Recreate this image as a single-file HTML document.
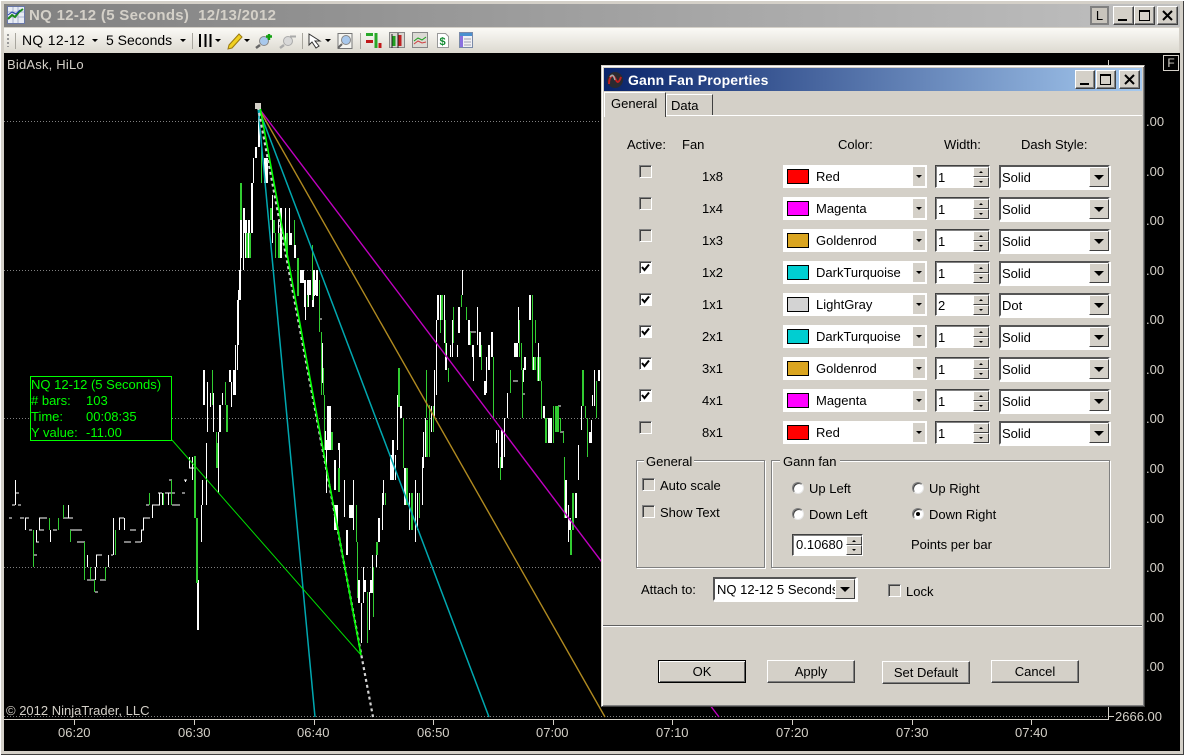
<!DOCTYPE html>
<html><head><meta charset="utf-8"><title>NQ 12-12</title>
<style>
html,body{margin:0;padding:0;background:#d4d0c8;}
body{width:1184px;height:755px;overflow:hidden;position:relative;font:13px "Liberation Sans",sans-serif;color:#000;}
div,span{position:absolute;box-sizing:border-box;white-space:pre;}
.t{line-height:16px;height:16px;margin-top:1px;}
.wb{background:#d4d0c8;border:1px solid;border-color:#fff #404040 #404040 #fff;box-shadow:inset -1px -1px 0 #808080;}
.cb{width:13px;height:13px;background:#d4d0c8;border:1px solid;border-color:#808080 #fff #fff #808080;box-shadow:inset 1px 1px 0 #404040;}
.cb.on{background:#fff;}
.combo{left:783px;width:144px;height:23px;background:#fff;}
.sw{left:4px;top:4px;width:22px;height:15px;border:1px solid #000;}
.combo .n{left:33px;top:4px;}
.combo .b{left:130px;top:2px;width:12px;height:19px;background:#d4d0c8;}
.combo .b i{position:absolute;width:0;height:0;border-left:3px solid transparent;border-right:3px solid transparent;border-top:3px solid #000;left:3px;top:8px;}
.spin{left:935px;width:55px;height:23px;background:#fff;border:1px solid;border-color:#404040 #fff #fff #404040;box-shadow:inset 1px 1px 0 #808080;}
.spin .v{left:2px;top:4px;}
.up,.dn{background:#d4d0c8;border:1px solid;border-color:#fff #404040 #404040 #fff;left:37px;width:16px;height:10px;}
.up{top:1px;}.dn{top:11px;}
.up i,.dn i{position:absolute;left:5px;width:0;height:0;border-left:2px solid transparent;border-right:2px solid transparent;}
.up i{top:3px;border-bottom:2px solid #000;}.dn i{top:3px;border-top:2px solid #000;}
.dash{left:999px;width:111px;height:24px;background:#fff;border:2px solid;border-color:#555 #fff #fff #555;box-shadow:1px 1px 0 #fff;}
.dash .d{left:1px;top:3px;}
.dash .b{left:88px;top:0;width:20px;height:20px;background:#d4d0c8;border:1px solid;border-color:#fff #404040 #404040 #fff;}
.dash .b i{position:absolute;left:4px;top:7px;width:0;height:0;border-left:5px solid transparent;border-right:5px solid transparent;border-top:5px solid #000;}
.btn{width:88px;height:23px;background:#d4d0c8;border:1px solid;border-color:#fff #404040 #404040 #fff;box-shadow:inset -1px -1px 0 #808080;text-align:center;line-height:21px;}
.grp{border:1px solid #808080;box-shadow:inset 1px 1px 0 #fff,1px 1px 0 #fff;}
.rad{width:12px;height:12px;border-radius:50%;background:#fff;border:1px solid;border-color:#808080 #e8e8e8 #e8e8e8 #808080;box-shadow:inset 1px 1px 0 #404040;}
.yl{left:1146px;width:20px;color:#d4d0c8;}
.xl{color:#d4d0c8;top:724px;}
.ck{position:absolute;left:1px;top:1px;}
</style></head><body>

<div style="left:0;top:0;width:1184px;height:755px;background:#d4d0c8;box-shadow:inset 1px 1px 0 #fff,inset -1px -1px 0 #404040"></div>

<!-- title -->
<div style="left:4px;top:4px;width:1176px;height:23px;background:linear-gradient(90deg,#808080,#c0c0c0)"></div>
<svg style="position:absolute;left:7px;top:6px" width="18" height="18" viewBox="0 0 18 18">
<rect x=".5" y=".5" width="17" height="17" fill="#e8ecf4" stroke="#6a78a8"/>
<path d="M1 6H17M1 11H17M6 1V17M11 1V17" stroke="#aab4d0"/>
<path d="M1 13L5 9 8 11 12 6 16 3" stroke="#1e8a1e" stroke-width="2" fill="none"/>
<path d="M1 9L5 6 9 8 13 4" stroke="#2040b0" fill="none"/>
</svg>
<div class="t" style="left:29px;top:7px;color:#d4d0c8;font-weight:bold;font-size:15px;letter-spacing:.3px">NQ 12-12 (5 Seconds)  12/13/2012</div>
<div style="left:1090px;top:6px;width:19px;height:19px;background:#c8c4bc;border:2px solid #808080;text-align:center;line-height:15px;font-size:13px">L</div>
<div class="wb" style="left:1113px;top:6px;width:21px;height:19px"><span style="left:4px;top:12px;width:9px;height:2px;background:#000"></span></div>
<div class="wb" style="left:1134px;top:6px;width:21px;height:19px"><span style="left:4px;top:3px;width:11px;height:11px;border:1px solid #000;border-top-width:2px"></span></div>
<div class="wb" style="left:1157px;top:6px;width:21px;height:19px"><svg style="position:absolute;left:4px;top:3px" width="11" height="11"><path d="M1 1L10 10M10 1L1 10" stroke="#000" stroke-width="2"/></svg></div>

<!-- toolbar -->
<div style="left:4px;top:28px;width:1175px;height:25px;background:linear-gradient(#fbfaf6,#dcd9d0)"></div>
<svg style="position:absolute;left:0;top:28px" width="480" height="25" viewBox="0 28 480 25">
<path d="M7 34h2v2h-2zM7 38h2v2h-2zM7 42h2v2h-2zM7 46h2v1h-2z" fill="#999"/>
<path d="M15.5 33V49M192.5 33V49M302.5 33V49M360.5 33V49" stroke="#a8a69e"/>
<path d="M92 39h6l-3 3zM180 39h6l-3 3zM215 39h6l-3 3zM244 39h6l-3 3zM325 39h6l-3 3z" fill="#000"/>
<path d="M200 34V47M205.5 34V47M210.5 34V47" stroke="#000" stroke-width="2"/>
<path d="M229 45L239 34l3 3-10 11-4 1z" fill="#f0d020" stroke="#9a7a10"/>
<circle cx="264" cy="41" r="4.5" fill="#a8c8ec" stroke="#888"/><path d="M260 45L256 48" stroke="#666" stroke-width="2.5"/>
<path d="M266 36.5h6M269 34v6" stroke="#10a010" stroke-width="2.4"/>
<circle cx="288" cy="41" r="4.5" fill="#d8d8d8" stroke="#aaa"/><path d="M284 45L280 48" stroke="#aaa" stroke-width="2.5"/>
<path d="M290 36.5h6" stroke="#aaa" stroke-width="2"/>
<path d="M309 34V45l3-3 4 6 3-2-4-5h5z" fill="#fff" stroke="#333"/>
<rect x="338" y="33.5" width="14" height="15" fill="#f4f4f0" stroke="#777"/>
<circle cx="346" cy="40" r="4.5" fill="#a8c8ec" stroke="#888"/><path d="M342 44L338 48" stroke="#666" stroke-width="2"/>
<path d="M366 33h7v3h-7z" fill="#28a828"/><path d="M366 40h7v3h-7z" fill="#c01818"/>
<path d="M376 33v15" stroke="#28a828" stroke-width="3"/><path d="M380 43v5" stroke="#c01818" stroke-width="3"/>
<rect x="389.5" y="32.5" width="15" height="15" fill="#d8d6d0" stroke="#888"/>
<path d="M394 36V46" stroke="#20a020" stroke-width="3"/><path d="M400 35V46" stroke="#c02020" stroke-width="3"/><path d="M392 34V48M398 33V48" stroke="#222"/>
<rect x="412.5" y="32.5" width="15" height="15" fill="#dcdad4" stroke="#888"/>
<path d="M414 41l4-3 4 2 4-3" stroke="#20a020" fill="none"/><path d="M414 44l4-3 4 2 4-1" stroke="#d04040" fill="none"/>
<path d="M437.5 33.5h8l3 3v11h-11z" fill="#fff" stroke="#999"/><text x="439.5" y="45" font-family="Liberation Sans" font-size="11" font-weight="bold" fill="#108a30">$</text>
<rect x="459.5" y="32.5" width="13" height="15" fill="#f0f0f4" stroke="#7a8aa8"/><rect x="460" y="33" width="12" height="3" fill="#4a90d0"/>
<rect x="460" y="36" width="3" height="11" fill="#8a70e0"/><path d="M464 39h7M464 42h7M464 45h7" stroke="#a0a0b0"/>
</svg>
<div class="t" style="left:22px;top:31px;font-size:14px;letter-spacing:.3px">NQ 12-12</div>
<div class="t" style="left:106px;top:31px;font-size:14px">5 Seconds</div>

<!-- chart -->
<div style="left:4px;top:53px;width:1176px;height:698px;background:#000"></div>
<div class="t" style="left:7px;top:56px;color:#d4d0c8;letter-spacing:.2px">BidAsk, HiLo</div>
<div class="t" style="left:6px;top:702px;color:#d4d0c8">© 2012 NinjaTrader, LLC</div>
<div style="left:1163px;top:55px;width:16px;height:16px;border:1px solid #d4d0c8;color:#d4d0c8;text-align:center;font-size:12px;line-height:14px">F</div>

<svg style="position:absolute;left:0;top:0" width="1184" height="755" viewBox="0 0 1184 755">
<g stroke="#808080" stroke-dasharray="1 2"><path d="M4 121.5H1108M4 270.5H1108M4 418.5H1108M4 567.5H1108M4 716.5H1108"/></g>
<path d="M4 719.5H1108M1108.5 60V720M1108 716.5H1114M74.5 720V725M194.5 720V725M314.5 720V725M433.5 720V725M553.5 720V725M672.5 720V725M792.5 720V725M912.5 720V725M1031.5 720V725" stroke="#d4d0c8"/>

<g shape-rendering="crispEdges" fill="none">
<!-- white 1px -->
<path stroke="#fff" d="M15.5 480V505M16 493H19M12 505H15M18 505H21M9 518H12M20 518H24M25 518H29M25.5 518V530M29 530H32M36.5 530V542M36 542H39M39.5 518V530M39 518H47M39 530H44M50.5 530V542M53 530H57M68.5 505V518M63 518H73M70 530H82M77 542H85M87.5 555V567M95.5 567V580M96.5 555V567M96 555H102M108.5 555V567M111 555H113M113.5 518V555M119.5 518V530M119 518H124M124.5 518V530M130 530H136M124 542H131M135 542H141M141.5 530V542M141 530H144M143.5 518V530M143 518H150M152.5 505V518M146 505H149M152 505H160M159.5 493V505M162.5 493V505M168.5 493V505M158 493H162M165 493H175M172 505H180M182 493H185M169 480H172M34 555H37M87 580H95M100 580H106M95 592H98M189.5 457V468M189 468H194M192.5 457V480M184 480H187M185.5 480V482"/>
<path stroke="#fff" d="M201.5 505V542M202.5 480V505M206.5 443V505M207.5 382V432M210.5 393V407M213.5 393V432M218.5 432V493M222.5 393V405M231.5 382V407M235.5 345V395M237.5 300V370M238.5 290V345M240.5 220V300M241.5 220V258M243.5 233V270M245.5 220V258M248.5 220V258M251.5 183V233M253.5 158V183M272.5 195V243M278.5 220V258M285.5 208V245M289.5 208V245M305.5 307V320M319 319H322M322.5 343V383M325.5 431V450M338.5 443V450M397.5 395V450M326.5 440V493M339.5 443V480M344.5 480V517M353.5 480V530M361.5 603V643M363.5 567V603M369.5 592V630M372.5 555V593M376.5 555V567M382.5 493V530M383.5 480V505M395.5 455V480M411.5 505V530M415.5 480V542M409.5 493V530M417.5 493V530M422.5 457V505M423.5 432V468M425.5 418V457M431.5 406V432M434.5 370V418M436.5 320V395M444.5 295V343M450.5 345V357M452.5 320V357M457.5 345V357M462.5 270V295M477.5 307V345M473.5 345V381M486.5 357V393M496.5 430V443M498.5 430V468M507.5 393V418M504.5 418V457M518.5 307V343M523.5 368V382M538.5 343V381M568.5 505V542M578.5 445V480M581.5 406V430M591.5 420V443M592.5 395V406M594.5 370V406M513 381H518M522 394H525M558 406H561M560 432H564M470 332H476M300 281H303"/>
<!-- white 2px -->
<path stroke="#fff" stroke-width="2" d="M198 580V630M204 370V405M220 405V432M230 370V382M234 370V395M240 270V300M244 208V233M246 220V258M249 220V258M252 183V233M256 147V158M259 109V147M265 158V183M267 158V183M281 208V258M291 233V245M295 245V258M301 270V283M303 270V283M314 270V296M317 270V296M305 280V307M308 280V307M310 280V295M313 280V307M316 280V295M328 406V450M330 406V450M335 505V530M337 505V530M335 460V490M347 530V555M350 505V518M352 505V518M359 580V603M365 580V592M371 580V593M377 542V555M379 518V542M391 455V480M393 440V480M401 406V418M405 468V505M406 468V505M438 295V320M441 295V320M446 343V370M459 307V333M469 320V345M473 345V357M480 332V357M485 381V395M489 345V370M492 332V357M502 430V468M515 343V357M517 343V357M525 357V370M530 295V320M534 357V370M544 406V418M546 418V443M549 418V443M551 418V443M566 480V518M570 518V530M576 493V518M590 432V443M599 370V381"/>
<!-- green 1px -->
<path stroke="#32cd32" d="M33.5 530V567M49.5 518V530M58.5 518V530M63.5 505V518M70.5 530V542M84.5 542V580M90.5 567V580M105.5 567V580M94.5 580V592M115.5 530V555M149.5 493V505M163.5 493V505M171.5 480V505M212.5 370V405M216.5 432V468M225.5 382V405M261.5 147V183M275.5 233V258M294.5 220V245M298.5 280V296M307.5 295V307M312.5 245V300M319.5 280V332M321.5 332V395M323.5 368V395M324.5 395V450M356.5 505V542M357.5 542V598M367.5 592V643M373.5 567V617M385.5 493V505M403.5 418V468M419.5 493V518M426.5 370V418M429.5 405V457M433.5 406V432M440.5 320V333M445.5 320V357M448.5 368V382M453.5 307V343M461.5 295V307M466.5 307V320M470.5 332V345M481.5 345V370M493.5 357V418M500.5 457V480M510.5 370V393M519.5 320V357M521.5 343V370M522.5 370V418M532.5 295V370M535.5 320V343M537.5 357V381M541.5 381V418M553.5 406V443M560.5 418V432M563.5 432V443M564.5 457V518M585.5 406V418M587.5 418V457M596.5 381V418"/>
<!-- green 2px -->
<path stroke="#32cd32" stroke-width="2" d="M195 456V518M197 518V583M217 443V468M227 405V432M241 183V220M247 233V258M250 233V258M271 208V220M274 220V233M279 233V258M287 233V258M298 258V296M332 432V450M399 368V407M339 468V492M377 542V555M407 468V505M412 493V530M427 420V457M442 295V320M535 357V370M540 357V381M546 418V443M556 406V432M558 406V432M571 530V555M573 493V530M583 370V406"/>
</g>

<!-- fan lines -->
<g fill="none">
<path d="M258 107L719 717" stroke="#c000c0" stroke-width="1.4"/>
<path d="M258 107L605 717" stroke="#b08a20" stroke-width="1.4"/>
<path d="M258 107L489 717" stroke="#00a8b0" stroke-width="1.5"/>
<path d="M258 107L315 717" stroke="#00a8b0" stroke-width="1.5"/>
<path d="M172 440L361 655" stroke="#00e000" stroke-width="1"/>
<path d="M258 107L373 717" stroke="#d3d3d3" stroke-width="2.2" stroke-dasharray="3 3"/>
<path d="M260 107L361 655" stroke="#00ff00" stroke-width="1.6"/>
</g>
<rect x="255" y="103" width="6" height="6" fill="#d4d0c8"/>
</svg>

<!-- tooltip -->
<div style="left:30px;top:376px;width:142px;height:65px;border:1px solid #00ff00;background:#000;color:#00ff00;font-size:13px;line-height:16px"><span style="left:0;top:0">NQ 12-12 (5 Seconds)</span><span style="left:0;top:16px"># bars:</span><span style="left:55px;top:16px">103</span><span style="left:0;top:32px">Time:</span><span style="left:55px;top:32px">00:08:35</span><span style="left:0;top:48px">Y value:</span><span style="left:55px;top:48px">-11.00</span></div>

<!-- axis labels -->
<div class="t xl" style="left:58px">06:20</div><div class="t xl" style="left:178px">06:30</div><div class="t xl" style="left:297px">06:40</div><div class="t xl" style="left:417px">06:50</div><div class="t xl" style="left:536px">07:00</div><div class="t xl" style="left:656px">07:10</div><div class="t xl" style="left:776px">07:20</div><div class="t xl" style="left:896px">07:30</div><div class="t xl" style="left:1015px">07:40</div>
<div class="t yl" style="top:113px">.00</div><div class="t yl" style="top:163px">.00</div><div class="t yl" style="top:212px">.00</div><div class="t yl" style="top:262px">.00</div><div class="t yl" style="top:311px">.00</div><div class="t yl" style="top:361px">.00</div><div class="t yl" style="top:410px">.00</div><div class="t yl" style="top:460px">.00</div><div class="t yl" style="top:510px">.00</div><div class="t yl" style="top:559px">.00</div><div class="t yl" style="top:609px">.00</div><div class="t yl" style="top:658px">.00</div>
<div class="t" style="left:1115px;top:708px;color:#d4d0c8">2666.00</div>

<!-- dialog -->
<div style="left:601px;top:65px;width:544px;height:642px;background:#d4d0c8;border:1px solid;border-color:#d4d0c8 #404040 #404040 #d4d0c8;box-shadow:inset 1px 1px 0 #fff,inset -1px -1px 0 #808080"></div>
<div style="left:604px;top:68px;width:538px;height:23px;background:linear-gradient(90deg,#0a246a,#a6caf0)"></div>
<svg style="position:absolute;left:606px;top:71px" width="18" height="18" viewBox="0 0 18 18">
<circle cx="9" cy="9" r="8" fill="#2a2a30"/>
<path d="M3 13C3 5 7 3 9 7S12 14 15 6" stroke="#c02020" stroke-width="2" fill="none"/>
<path d="M4 6C7 2 8 6 9 9" stroke="#a8a8a8" stroke-width="1.5" fill="none"/>
</svg>
<div class="t" style="left:628px;top:71px;color:#fff;font-weight:bold;font-size:14px;letter-spacing:.15px">Gann Fan Properties</div>
<div class="wb" style="left:1075px;top:70px;width:20px;height:19px"><span style="left:4px;top:12px;width:9px;height:2px;background:#000"></span></div>
<div class="wb" style="left:1096px;top:70px;width:20px;height:19px"><span style="left:3px;top:3px;width:11px;height:11px;border:1px solid #000;border-top-width:2px"></span></div>
<div class="wb" style="left:1119px;top:70px;width:21px;height:19px"><svg style="position:absolute;left:4px;top:3px" width="11" height="11"><path d="M1 1L10 10M10 1L1 10" stroke="#000" stroke-width="2"/></svg></div>

<!-- tabs -->
<div style="left:604px;top:115px;width:538px;height:1px;background:#fff"></div>
<div style="left:666px;top:94px;width:47px;height:21px;background:#d4d0c8;border:1px solid;border-color:#fff #404040 #d4d0c8 #fff;border-bottom:0"></div>
<div style="left:604px;top:92px;width:62px;height:25px;background:#d4d0c8;border-top:1px solid #fff;border-left:1px solid #fff;border-right:1px solid #404040"></div>
<div class="t" style="left:611px;top:95px">General</div>
<div class="t" style="left:671px;top:97px">Data</div>

<!-- headers -->
<div class="t" style="left:627px;top:136px">Active:</div>
<div class="t" style="left:682px;top:136px">Fan</div>
<div class="t" style="left:838px;top:136px">Color:</div>
<div class="t" style="left:944px;top:136px">Width:</div>
<div class="t" style="left:1021px;top:136px">Dash Style:</div>

<!-- rows -->
<div class="cb" style="left:639px;top:165px"></div><div class="t" style="left:702px;top:168px">1x8</div>
<div class="combo" style="top:165px"><span class="sw" style="background:#f00"></span><span class="n">Red</span><span class="b"><i></i></span></div>
<div class="spin" style="top:165px"><span class="v">1</span><span class="up"><i></i></span><span class="dn"><i></i></span></div>
<div class="dash" style="top:165px"><span class="d">Solid</span><span class="b"><i></i></span></div>

<div class="cb" style="left:639px;top:197px"></div><div class="t" style="left:702px;top:200px">1x4</div>
<div class="combo" style="top:197px"><span class="sw" style="background:#f0f"></span><span class="n">Magenta</span><span class="b"><i></i></span></div>
<div class="spin" style="top:197px"><span class="v">1</span><span class="up"><i></i></span><span class="dn"><i></i></span></div>
<div class="dash" style="top:197px"><span class="d">Solid</span><span class="b"><i></i></span></div>

<div class="cb" style="left:639px;top:229px"></div><div class="t" style="left:702px;top:232px">1x3</div>
<div class="combo" style="top:229px"><span class="sw" style="background:#daa520"></span><span class="n">Goldenrod</span><span class="b"><i></i></span></div>
<div class="spin" style="top:229px"><span class="v">1</span><span class="up"><i></i></span><span class="dn"><i></i></span></div>
<div class="dash" style="top:229px"><span class="d">Solid</span><span class="b"><i></i></span></div>

<div class="cb on" style="left:639px;top:261px"><svg class="ck" width="10" height="10"><path d="M1 4L3.5 7 8 1.5" stroke="#000" stroke-width="2" fill="none"/></svg></div><div class="t" style="left:702px;top:264px">1x2</div>
<div class="combo" style="top:261px"><span class="sw" style="background:#00ced1"></span><span class="n">DarkTurquoise</span><span class="b"><i></i></span></div>
<div class="spin" style="top:261px"><span class="v">1</span><span class="up"><i></i></span><span class="dn"><i></i></span></div>
<div class="dash" style="top:261px"><span class="d">Solid</span><span class="b"><i></i></span></div>

<div class="cb on" style="left:639px;top:293px"><svg class="ck" width="10" height="10"><path d="M1 4L3.5 7 8 1.5" stroke="#000" stroke-width="2" fill="none"/></svg></div><div class="t" style="left:702px;top:296px">1x1</div>
<div class="combo" style="top:293px"><span class="sw" style="background:#d3d3d3"></span><span class="n">LightGray</span><span class="b"><i></i></span></div>
<div class="spin" style="top:293px"><span class="v">2</span><span class="up"><i></i></span><span class="dn"><i></i></span></div>
<div class="dash" style="top:293px"><span class="d">Dot</span><span class="b"><i></i></span></div>

<div class="cb on" style="left:639px;top:325px"><svg class="ck" width="10" height="10"><path d="M1 4L3.5 7 8 1.5" stroke="#000" stroke-width="2" fill="none"/></svg></div><div class="t" style="left:702px;top:328px">2x1</div>
<div class="combo" style="top:325px"><span class="sw" style="background:#00ced1"></span><span class="n">DarkTurquoise</span><span class="b"><i></i></span></div>
<div class="spin" style="top:325px"><span class="v">1</span><span class="up"><i></i></span><span class="dn"><i></i></span></div>
<div class="dash" style="top:325px"><span class="d">Solid</span><span class="b"><i></i></span></div>

<div class="cb on" style="left:639px;top:357px"><svg class="ck" width="10" height="10"><path d="M1 4L3.5 7 8 1.5" stroke="#000" stroke-width="2" fill="none"/></svg></div><div class="t" style="left:702px;top:360px">3x1</div>
<div class="combo" style="top:357px"><span class="sw" style="background:#daa520"></span><span class="n">Goldenrod</span><span class="b"><i></i></span></div>
<div class="spin" style="top:357px"><span class="v">1</span><span class="up"><i></i></span><span class="dn"><i></i></span></div>
<div class="dash" style="top:357px"><span class="d">Solid</span><span class="b"><i></i></span></div>

<div class="cb on" style="left:639px;top:389px"><svg class="ck" width="10" height="10"><path d="M1 4L3.5 7 8 1.5" stroke="#000" stroke-width="2" fill="none"/></svg></div><div class="t" style="left:702px;top:392px">4x1</div>
<div class="combo" style="top:389px"><span class="sw" style="background:#f0f"></span><span class="n">Magenta</span><span class="b"><i></i></span></div>
<div class="spin" style="top:389px"><span class="v">1</span><span class="up"><i></i></span><span class="dn"><i></i></span></div>
<div class="dash" style="top:389px"><span class="d">Solid</span><span class="b"><i></i></span></div>

<div class="cb" style="left:639px;top:421px"></div><div class="t" style="left:702px;top:424px">8x1</div>
<div class="combo" style="top:421px"><span class="sw" style="background:#f00"></span><span class="n">Red</span><span class="b"><i></i></span></div>
<div class="spin" style="top:421px"><span class="v">1</span><span class="up"><i></i></span><span class="dn"><i></i></span></div>
<div class="dash" style="top:421px"><span class="d">Solid</span><span class="b"><i></i></span></div>

<!-- groups -->
<div class="grp" style="left:636px;top:460px;width:129px;height:108px"></div>
<div class="t" style="left:644px;top:453px;background:#d4d0c8;padding:0 2px">General</div>
<div class="cb" style="left:642px;top:478px"></div><div class="t" style="left:660px;top:477px">Auto scale</div>
<div class="cb" style="left:642px;top:505px"></div><div class="t" style="left:660px;top:504px">Show Text</div>

<div class="grp" style="left:771px;top:460px;width:339px;height:108px"></div>
<div class="t" style="left:780px;top:453px;background:#d4d0c8;padding:0 3px">Gann fan</div>
<div class="rad" style="left:792px;top:482px"></div><div class="t" style="left:809px;top:480px">Up Left</div>
<div class="rad" style="left:912px;top:482px"></div><div class="t" style="left:929px;top:480px">Up Right</div>
<div class="rad" style="left:792px;top:508px"></div><div class="t" style="left:809px;top:506px">Down Left</div>
<div class="rad" style="left:912px;top:508px"><span style="left:3px;top:3px;width:4px;height:4px;border-radius:50%;background:#000"></span></div><div class="t" style="left:929px;top:506px">Down Right</div>
<div class="spin" style="left:792px;top:534px;width:71px;height:22px"><span style="left:3px;top:2px">0.10680</span><span class="up" style="left:53px;height:9px"><i></i></span><span class="dn" style="left:53px;top:10px;height:10px"><i></i></span></div>
<div class="t" style="left:911px;top:536px">Points per bar</div>

<div class="t" style="left:641px;top:581px">Attach to:</div>
<div class="dash" style="left:713px;top:577px;width:144px;height:24px;overflow:hidden"><span class="d" style="left:2px;width:118px;overflow:hidden">NQ 12-12 5 Seconds</span><span class="b" style="left:120px"><i></i></span></div>
<div class="cb" style="left:888px;top:584px"></div><div class="t" style="left:906px;top:583px">Lock</div>

<div style="left:603px;top:625px;width:539px;height:1px;background:#606060"></div>
<div style="left:603px;top:626px;width:539px;height:1px;background:#fff"></div>

<div class="btn" style="left:658px;top:660px;border:1px solid #000;box-shadow:inset 1px 1px 0 #fff,inset -1px -1px 0 #606060">OK</div>
<div class="btn" style="left:767px;top:660px">Apply</div>
<div class="btn" style="left:882px;top:661px">Set Default</div>
<div class="btn" style="left:991px;top:660px">Cancel</div>

</body></html>
